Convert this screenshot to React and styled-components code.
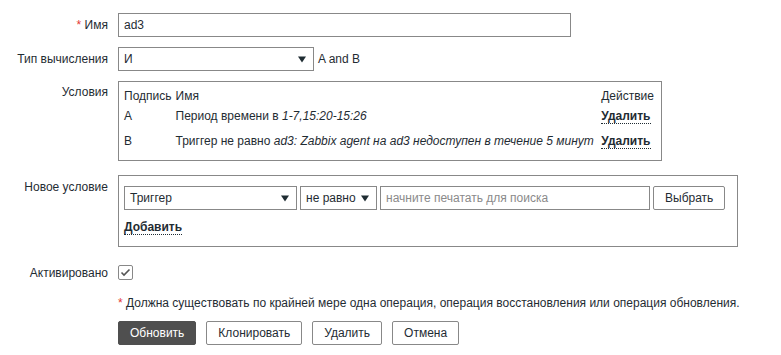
import React from 'react'
import styled, { createGlobalStyle } from 'styled-components'

const GlobalStyle = createGlobalStyle`
    html, body {
        margin: 0;
        padding: 0;
        background: #fff;
    }
    body {
        font-family: "Liberation Sans", Arial, sans-serif;
        font-size: 12px;
        line-height: 14px;
        color: #1f2c33;
    }
    * {
        box-sizing: border-box;
    }
`

const Page = styled.div`
    width: 781px;
    height: 355px;
    padding-top: 13px;
    overflow: hidden;
`

const Row = styled.div`
    display: grid;
    grid-template-columns: 108px 1fr;
    column-gap: 10px;
    align-items: ${p => (p.$center ? 'center' : 'start')};
    margin-top: ${p => p.$top || 0}px;
`

const Label = styled.div`
    text-align: right;
    padding-top: ${p => (p.$pad === undefined ? 5 : p.$pad)}px;
    white-space: nowrap;
`

const Asterisk = styled.span`
    color: #e33734;
`

const Field = styled.div`
    display: flex;
    align-items: center;
    gap: ${p => p.$gap || 4}px;
`

const TextInput = styled.input`
    width: ${p => p.$w}px;
    height: 24px;
    border: 1px solid #888;
    padding: 0 5px;
    font: inherit;
    color: #1f2c33;
    background: #fff;
    outline: none;

    &::placeholder {
        color: #8a8a8a;
    }
`

const SelectBox = styled.div`
    position: relative;
    width: ${p => p.$w}px;
    height: 24px;
    border: 1px solid #888;
    padding: 4px 5px 0 5px;
    background: #fff;
    white-space: nowrap;
`

const Arrow = styled.svg`
    position: absolute;
    right: 7px;
    top: 8px;
`

const Select = ({ width, value }) => (
    <SelectBox $w={width}>
        {value}
        <Arrow width="8" height="7" viewBox="0 0 8 7">
            <path d="M0 0.5 L8 0.5 L4 6.5 Z" fill="#1f2c33" />
        </Arrow>
    </SelectBox>
)

const Box = styled.div`
    width: ${p => p.$w}px;
    border: 1px solid #888;
    padding: ${p => p.$pad};
`

const CondGrid = styled.div`
    display: grid;
    grid-template-columns: auto 1fr auto;
`

const Cell = styled.div`
    padding-top: ${p => p.$top}px;
    padding-right: ${p => p.$right || 0}px;
    white-space: nowrap;
`

const LinkBtn = styled.span`
    display: inline-block;
    font-weight: bold;
    color: #1f2c33;
    line-height: 13px;
    border-bottom: 1px dotted #1f2c33;
    cursor: pointer;
`

const Button = styled.button`
    height: 24px;
    padding: 0 ${p => p.$px || 11}px;
    font: inherit;
    border-radius: 2px;
    cursor: pointer;
    border: 1px solid ${p => (p.$primary ? '#4f4f4f' : '#888')};
    background: ${p => (p.$primary ? '#4f4f4f' : '#fff')};
    color: ${p => (p.$primary ? '#fff' : '#1f2c33')};
`

const ButtonBar = styled.div`
    display: flex;
    gap: 10px;
`

const Check = styled.div`
    width: 15px;
    height: 15px;
    border: 1px solid #888;
    border-radius: 2px;
    display: flex;
    align-items: center;
    justify-content: center;
`

const conditions = [
    { label: 'A', text: 'Период времени в ', em: '1-7,15:20-15:26', top: 6 },
    { label: 'B', text: 'Триггер не равно ', em: 'ad3: Zabbix agent на ad3 недоступен в течение 5 минут', top: 10 },
]

const App = () => {
    return (
        <Page>
            <GlobalStyle />
            <Row>
                <Label><Asterisk>*</Asterisk> Имя</Label>
                <TextInput $w={453} defaultValue="ad3" />
            </Row>
            <Row $top={10}>
                <Label>Тип вычисления</Label>
                <Field>
                    <Select width={196} value="И" />
                    <span>A and B</span>
                </Field>
            </Row>
            <Row $top={10}>
                <Label $pad={4}>Условия</Label>
                <Box $w={544} $pad="0 7px 11px 5px">
                    <CondGrid>
                        <Cell $top={7} $right={4}>Подпись</Cell>
                        <Cell $top={7}>Имя</Cell>
                        <Cell $top={7}>Действие</Cell>
                        {conditions.map(c => (
                            <React.Fragment key={c.label}>
                                <Cell $top={c.top}>{c.label}</Cell>
                                <Cell $top={c.top} $right={5}>{c.text}<i>{c.em}</i></Cell>
                                <Cell $top={c.top}><LinkBtn>Удалить</LinkBtn></Cell>
                            </React.Fragment>
                        ))}
                    </CondGrid>
                </Box>
            </Row>
            <Row $top={14}>
                <Label>Новое условие</Label>
                <Box $w={620} $pad="10px 5px 11px 5px">
                    <Field $gap={3}>
                        <Select width={173} value="Триггер" />
                        <Select width={77} value="не равно" />
                        <TextInput $w={270} placeholder="начните печатать для поиска" />
                        <Button $px={11}>Выбрать</Button>
                    </Field>
                    <div style={{ marginTop: 10 }}>
                        <LinkBtn>Добавить</LinkBtn>
                    </div>
                </Box>
            </Row>
            <Row $top={18} $center>
                <Label $pad={0}>Активировано</Label>
                <Check>
                    <svg width="11" height="9" viewBox="0 0 11 9">
                        <path d="M1.5 4.5 L4 7 L9.5 1.5" stroke="#555" strokeWidth="1.6" fill="none" />
                    </svg>
                </Check>
            </Row>
            <Row $top={16}>
                <div />
                <div><Asterisk>*</Asterisk> Должна существовать по крайней мере одна операция, операция восстановления или операция обновления.</div>
            </Row>
            <Row $top={11}>
                <div />
                <ButtonBar>
                    <Button $primary>Обновить</Button>
                    <Button>Клонировать</Button>
                    <Button>Удалить</Button>
                    <Button>Отмена</Button>
                </ButtonBar>
            </Row>
        </Page>
    )
}

export default App
